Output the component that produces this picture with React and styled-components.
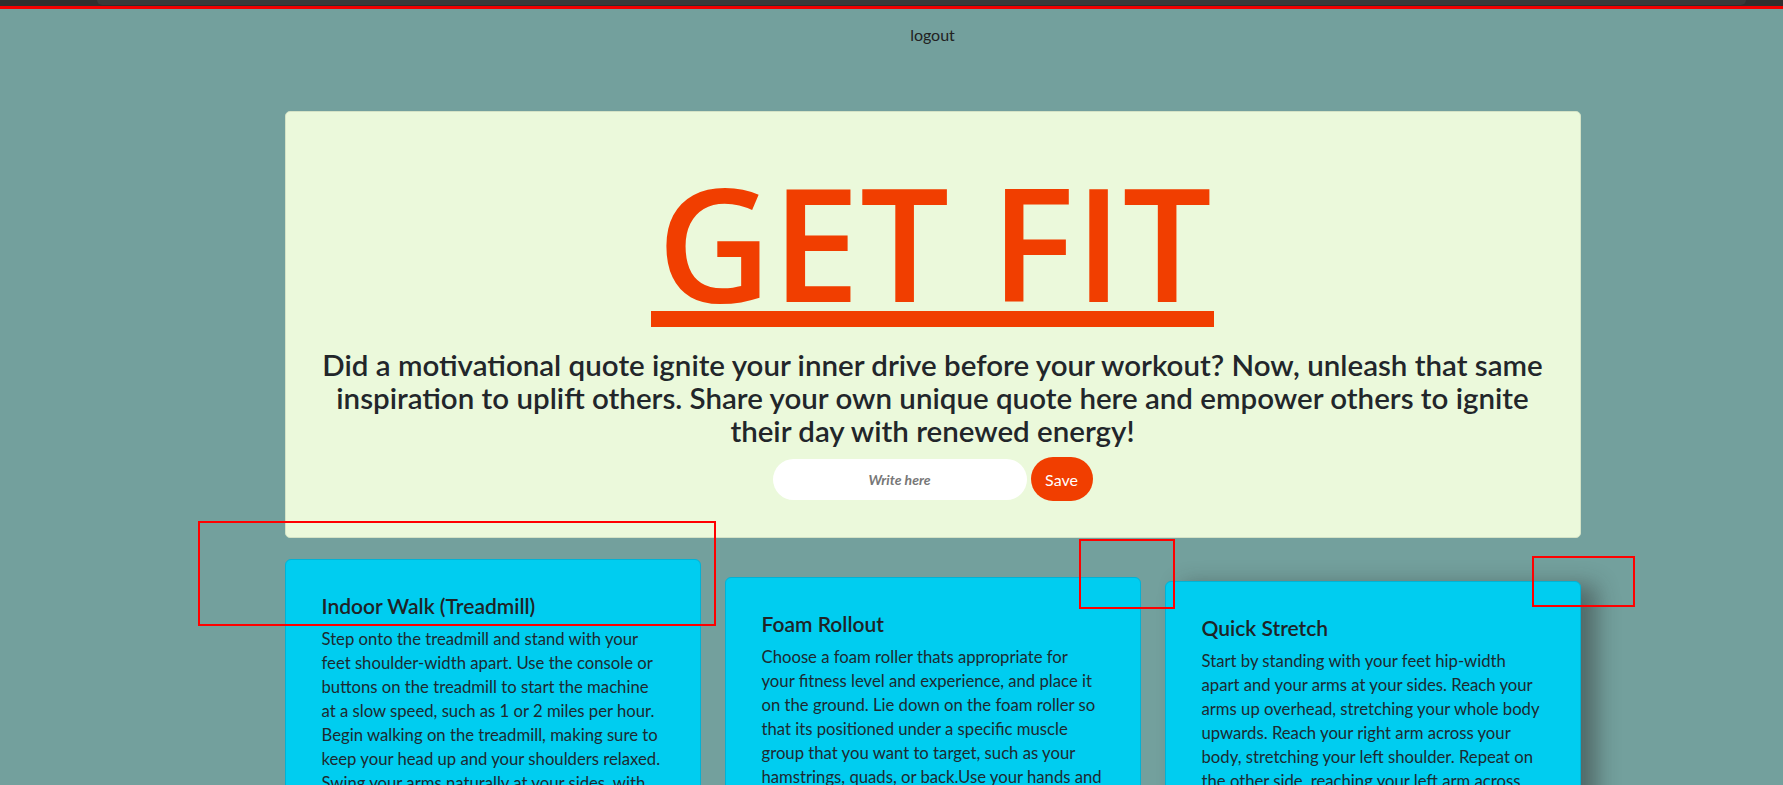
import React, { useState } from "react";
import styled, { createGlobalStyle } from "styled-components";

const GlobalStyle = createGlobalStyle`
  html, body {
    margin: 0;
    padding: 0;
    background-color: #73a09d;
    font-family: "Lato", "Noto Sans", sans-serif;
    color: #222;
    overflow-x: hidden;
  }
`;

const Page = styled.div`
  position: relative;
  min-height: 100vh;
  background-color: #73a09d;
`;

const TopBar = styled.div`
  height: 6px;
  background-color: #2e2e2e;
  display: flex;
  padding: 0 37px 0 97px;

  .inner {
    flex: 1;
    height: 5px;
    background-color: #3a3a3a;
    border-radius: 0 0 6px 6px;
  }
`;

const RedLine = styled.div`
  height: 3px;
  background-color: #f20000;
`;

const Content = styled.div`
  padding-left: 82px;
  display: flex;
  flex-direction: column;
  align-items: center;
`;

const Nav = styled.nav`
  padding: 16px 0 0 0;
  display: flex;
  justify-content: center;
`;

const LogoutButton = styled.button`
  background: none;
  border: none;
  padding: 0;
  font-family: "Lato", sans-serif;
  font-size: 16px;
  line-height: 19.2px;
  color: #222;
  cursor: pointer;
`;

const Hero = styled.section`
  margin-top: 67px;
  width: 1296px;
  box-sizing: border-box;
  background-color: #ebf9db;
  border: 1px solid #d4e3c6;
  border-radius: 5px;
  padding: 59px 30px 36px 30px;
  display: flex;
  flex-direction: column;
  align-items: center;
`;

const Title = styled.h1`
  margin: 0;
  font-family: "Open Sans", "Noto Sans", sans-serif;
  font-weight: 600;
  font-size: 158px;
  line-height: 140px;
  color: #f13e00;
  text-align: center;

  span {
    display: inline-block;
    border-bottom: 16px solid #f13e00;
    padding: 0 2px 0 6px;
  }
`;

const Intro = styled.p`
  margin: 21px 0 0 0;
  font-size: 29.5px;
  line-height: 33px;
  font-weight: 600;
  color: #22262a;
  text-align: center;
`;

const QuoteForm = styled.form`
  margin-top: 10px;
  display: flex;
  align-items: center;
  gap: 4px;
`;

const QuoteInput = styled.input`
  width: 254px;
  height: 41px;
  box-sizing: border-box;
  border: none;
  border-radius: 21px;
  background-color: #fff;
  text-align: center;
  font-family: "Lato", sans-serif;
  font-size: 14px;
  outline: none;

  &::placeholder {
    color: #777;
    font-style: italic;
    font-weight: 700;
  }
`;

const SaveButton = styled.button`
  width: 62px;
  height: 44px;
  border: none;
  border-radius: 22px;
  background-color: #f13e00;
  color: #fff;
  font-family: "Lato", sans-serif;
  font-size: 16px;
  cursor: pointer;
`;

const CardRow = styled.div`
  display: flex;
  align-items: flex-start;
  gap: 24px;
  width: 1296px;
`;

const ExerciseCard = styled.article`
  width: 416px;
  box-sizing: border-box;
  margin-top: ${(p) => p.$offset}px;
  background-color: #00cdf0;
  border: 1px solid #00b3d6;
  border-radius: 6px;
  padding: 33px 36px 36px 36px;
  box-shadow: ${(p) => (p.$raised ? "16px 4px 22px rgba(40, 40, 40, 0.45)" : "none")};
`;

const CardTitle = styled.h3`
  margin: 0;
  font-size: 21px;
  line-height: 25.2px;
  font-weight: 600;
  color: #1f2326;
`;

const CardText = styled.p`
  margin: 9px 0 0 0;
  font-size: 16.7px;
  line-height: 24px;
  color: #1d2a30;
`;

const Marker = styled.div`
  position: absolute;
  left: ${(p) => p.$x}px;
  top: ${(p) => p.$y}px;
  width: ${(p) => p.$w}px;
  height: ${(p) => p.$h}px;
  border: 2px solid #f00;
  box-sizing: border-box;
  pointer-events: none;
`;

const exercises = [
  {
    name: "Indoor Walk (Treadmill)",
    offset: 21,
    text: "Step onto the treadmill and stand with your feet shoulder-width apart. Use the console or buttons on the treadmill to start the machine at a slow speed, such as 1 or 2 miles per hour. Begin walking on the treadmill, making sure to keep your head up and your shoulders relaxed. Swing your arms naturally at your sides, with your elbows slightly bent. Gradually increase the speed until you reach a comfortable, brisk pace.",
  },
  {
    name: "Foam Rollout",
    offset: 39,
    text: "Choose a foam roller thats appropriate for your fitness level and experience, and place it on the ground. Lie down on the foam roller so that its positioned under a specific muscle group that you want to target, such as your hamstrings, quads, or back.Use your hands and feet to slowly roll your body back and forth over the foam roller.",
  },
  {
    name: "Quick Stretch",
    offset: 43,
    raised: true,
    text: "Start by standing with your feet hip-width apart and your arms at your sides. Reach your arms up overhead, stretching your whole body upwards. Reach your right arm across your body, stretching your left shoulder. Repeat on the other side, reaching your left arm across your body to stretch your right shoulder.",
  },
];

const markers = [
  { x: 198, y: 521, w: 518, h: 105 },
  { x: 1079, y: 539, w: 96, h: 70 },
  { x: 1532, y: 556, w: 103, h: 51 },
];

const App = () => {
  const [quote, setQuote] = useState("");

  const handleSubmit = (event) => {
    event.preventDefault();
    setQuote("");
  };

  return (
    <Page>
      <GlobalStyle />
      <TopBar>
        <div className="inner" />
      </TopBar>
      <RedLine />
      <Content>
        <Nav>
          <LogoutButton>logout</LogoutButton>
        </Nav>

        <Hero>
          <Title>
            <span>GET FIT</span>
          </Title>
          <Intro>
            Did a motivational quote ignite your inner drive before your workout? Now, unleash that same
            inspiration to uplift others. Share your own unique quote here and empower others to ignite
            their day with renewed energy!
          </Intro>
          <QuoteForm onSubmit={handleSubmit}>
            <QuoteInput
              type="text"
              placeholder="Write here"
              value={quote}
              onChange={(e) => setQuote(e.target.value)}
            />
            <SaveButton type="submit">Save</SaveButton>
          </QuoteForm>
        </Hero>

        <CardRow>
          {exercises.map((ex) => (
            <ExerciseCard key={ex.name} $offset={ex.offset} $raised={ex.raised}>
              <CardTitle>{ex.name}</CardTitle>
              <CardText>{ex.text}</CardText>
            </ExerciseCard>
          ))}
        </CardRow>
      </Content>

      {markers.map((m, i) => (
        <Marker key={i} $x={m.x} $y={m.y} $w={m.w} $h={m.h} />
      ))}
    </Page>
  );
};

export default App;
